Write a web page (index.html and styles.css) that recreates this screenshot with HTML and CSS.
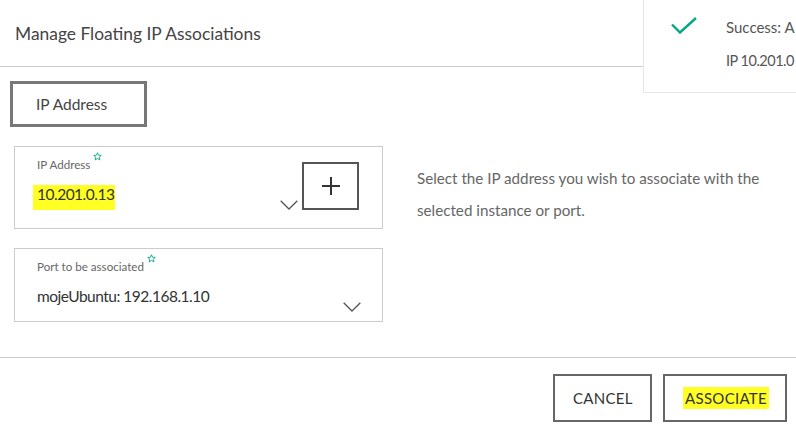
FILE: index.html
```html
<!DOCTYPE html>
<html lang="en">
<head>
<meta charset="utf-8">
<title>Manage Floating IP Associations</title>
<link rel="stylesheet" href="styles.css">
</head>
<body>
<div class="modal">
  <header class="modal-header">
    <h1 class="modal-title">Manage Floating IP Associations</h1>
  </header>
  <main class="modal-body">
    <div class="tab">IP Address</div>
    <div class="form-row">
      <div class="fields">
        <div class="field field-ip">
          <div class="select">
            <div class="label">IP Address<svg class="star" viewBox="0 0 10 10" width="9" height="9"><path d="M5 0.8 L6.2 3.6 L9.2 3.8 L6.9 5.8 L7.6 8.8 L5 7.2 L2.4 8.8 L3.1 5.8 L0.8 3.8 L3.8 3.6 Z" fill="none" stroke="#01a982" stroke-width="1"/></svg></div>
            <div class="value-row">
              <span class="value hl">10.201.0.13</span>
              <svg class="chevron" viewBox="0 0 18 10" width="18" height="10"><path d="M0.7 0.7 L9 9 L17.3 0.7" fill="none" stroke="#555" stroke-width="1.3"/></svg>
            </div>
          </div>
          <button class="plus-btn" type="button"><svg viewBox="0 0 20 20" width="20" height="20"><path d="M10 1 V19 M1 10 H19" stroke="#333" stroke-width="2"/></svg></button>
        </div>
        <div class="field">
          <div class="select">
            <div class="label">Port to be associated<svg class="star" viewBox="0 0 10 10" width="9" height="9"><path d="M5 0.8 L6.2 3.6 L9.2 3.8 L6.9 5.8 L7.6 8.8 L5 7.2 L2.4 8.8 L3.1 5.8 L0.8 3.8 L3.8 3.6 Z" fill="none" stroke="#01a982" stroke-width="1"/></svg></div>
            <div class="value-row">
              <span class="value">mojeUbuntu: 192.168.1.10</span>
              <svg class="chevron" viewBox="0 0 18 10" width="18" height="10"><path d="M0.7 0.7 L9 9 L17.3 0.7" fill="none" stroke="#555" stroke-width="1.3"/></svg>
            </div>
          </div>
        </div>
      </div>
      <p class="help">Select the IP address you wish to associate with the selected instance or port.</p>
    </div>
  </main>
  <footer class="modal-footer">
    <button class="btn" type="button">CANCEL</button>
    <button class="btn" type="button"><span class="hl-btn">ASSOCIATE</span></button>
  </footer>
</div>
<div class="toast">
  <svg class="check" viewBox="0 0 26 17" width="26" height="17"><path d="M1 7.5 L9 15.5 L25 1" fill="none" stroke="#01a982" stroke-width="2.4"/></svg>
  <div class="toast-text">
    <div>Success: A</div>
    <div class="toast-ip">IP 10.201.0</div>
  </div>
</div>
</body>
</html>
```

FILE: styles.css
```css
html, body {
  margin: 0;
  padding: 0;
  background: #fff;
}
body {
  width: 796px;
  height: 434px;
  overflow: hidden;
  position: relative;
  font-family: Lato, "Liberation Sans", sans-serif;
  color: #444;
}
.modal-header {
  height: 66px;
  border-bottom: 1px solid #ccc;
  display: flex;
  align-items: center;
  padding-left: 15px;
}
.modal-title {
  margin: 0;
  font-size: 17.4px;
  font-weight: 400;
  color: #444;
}
.modal-body {
  padding: 14px 0 0 10px;
}
.tab {
  width: 137px;
  height: 46px;
  box-sizing: border-box;
  border: 3px solid #777;
  padding-left: 23px;
  display: flex;
  align-items: center;
  font-size: 15.5px;
  color: #444;
}
.form-row {
  display: flex;
  margin-top: 19px;
  margin-left: 4px;
}
.fields {
  width: 369px;
  display: flex;
  flex-direction: column;
  gap: 19px;
}
.field {
  border: 1px solid #ccc;
  display: flex;
}
.select {
  flex: 1;
  padding: 11px 0 9px 22px;
  display: flex;
  flex-direction: column;
}
.label {
  font-size: 11.6px;
  line-height: 14px;
  color: #666;
}
.star {
  vertical-align: top;
  margin-left: 3px;
  margin-top: -6px;
}
.value-row {
  display: flex;
  justify-content: space-between;
  margin-top: 13px;
}
.value {
  font-size: 15.5px;
  letter-spacing: -0.5px;
  line-height: 18px;
  color: #333;
}
.hl {
  background: #ffff24;
  margin-left: -4px;
  padding: 0 1px 0 4px;
}
.chevron {
  margin-top: 15px;
  flex: none;
}
.field-ip .select {
  padding-right: 4px;
}
.field:not(.field-ip) .select {
  padding-right: 21px;
}
.plus-btn {
  width: 57px;
  height: 48px;
  box-sizing: border-box;
  border: 2px solid #555;
  background: #fff;
  margin: 15px 23px 18px 0;
  padding: 0;
  display: flex;
  align-items: center;
  justify-content: center;
}
.help {
  margin: 16px 0 0 34px;
  width: 370px;
  font-size: 15.2px;
  line-height: 32px;
  color: #666;
}
.modal-footer {
  position: absolute;
  left: 0;
  right: 0;
  top: 357px;
  border-top: 1px solid #ccc;
  display: flex;
  justify-content: flex-end;
  gap: 11px;
  padding: 16px 9px 0 0;
}
.btn {
  height: 48px;
  box-sizing: border-box;
  border: 2px solid #666;
  background: #fff;
  font-family: Lato, "Liberation Sans", sans-serif;
  font-size: 15px;
  letter-spacing: 0.3px;
  color: #333;
  padding: 0 18px;
}
.btn:first-child {
  width: 99px;
}
.btn:last-child {
  width: 124px;
}
.hl-btn {
  background: #ffff24;
  padding: 2px 2px;
}
.toast {
  position: absolute;
  top: -1px;
  left: 643px;
  right: 0;
  height: 94px;
  box-sizing: border-box;
  border: 1px solid #e6e6e6;
  border-right: none;
  background: #fff;
  display: flex;
  align-items: flex-start;
  padding: 17px 0 0 27px;
}
.check {
  flex: none;
}
.toast-text {
  margin-left: 29px;
  margin-top: -6px;
  font-size: 15px;
  line-height: 33px;
  color: #555;
  white-space: nowrap;
}
.toast-ip {
  font-size: 14.5px;
  letter-spacing: -0.5px;
}
```
